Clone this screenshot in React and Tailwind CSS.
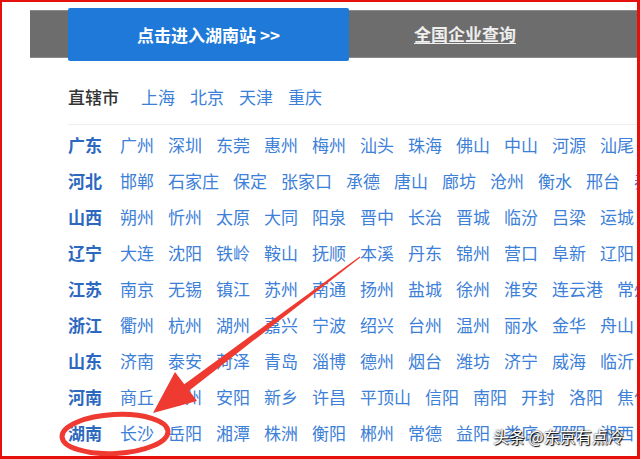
import React from 'react';

const provinces = [
  ['广东', ['广州', '深圳', '东莞', '惠州', '梅州', '汕头', '珠海', '佛山', '中山', '河源', '汕尾']],
  ['河北', ['邯郸', '石家庄', '保定', '张家口', '承德', '唐山', '廊坊', '沧州', '衡水', '邢台', '秦皇岛']],
  ['山西', ['朔州', '忻州', '太原', '大同', '阳泉', '晋中', '长治', '晋城', '临汾', '吕梁', '运城']],
  ['辽宁', ['大连', '沈阳', '铁岭', '鞍山', '抚顺', '本溪', '丹东', '锦州', '营口', '阜新', '辽阳']],
  ['江苏', ['南京', '无锡', '镇江', '苏州', '南通', '扬州', '盐城', '徐州', '淮安', '连云港', '常州']],
  ['浙江', ['衢州', '杭州', '湖州', '嘉兴', '宁波', '绍兴', '台州', '温州', '丽水', '金华', '舟山']],
  ['山东', ['济南', '泰安', '菏泽', '青岛', '淄博', '德州', '烟台', '潍坊', '济宁', '威海', '临沂']],
  ['河南', ['商丘', '郑州', '安阳', '新乡', '许昌', '平顶山', '信阳', '南阳', '开封', '洛阳', '焦作']],
  ['湖南', ['长沙', '岳阳', '湘潭', '株洲', '衡阳', '郴州', '常德', '益阳', '娄底', '邵阳', '湘西']],
];

const direct = ['上海', '北京', '天津', '重庆'];

function Annotation() {
  // hand-drawn red arrow and circle over the list
  return (
    <svg className="absolute left-0 top-0 pointer-events-none" width="640" height="459">
      <polygon
        points="358.3,255.4 357.7,254.6 181.6,382.8 186.4,389.2"
        fill="#ee3a30"
      />
      <polygon points="151,411 195,399 173,370" fill="#ee3a30" />
      <ellipse
        cx="113"
        cy="432"
        rx="53"
        ry="19.5"
        fill="none"
        stroke="#ee3a30"
        strokeWidth="5"
        transform="rotate(-3 113 432)"
      />
    </svg>
  );
}

export default function App() {
  return (
    <div className="relative w-[640px] h-[459px] overflow-hidden bg-white border-t-2 border-l-2 border-r-[3px] border-b-[3px] border-[#e5100c] font-['Noto_Sans_CJK_SC','Noto_Sans',sans-serif]">
      <div className="mt-[8px] ml-[28px] h-[48px] flex items-start bg-[#6d6d6d] border-t border-b border-[#8a8a8a]">
        <div className="ml-[38px] -mt-[3px] w-[281px] h-[53px] shrink-0 flex items-center justify-center bg-[#1f79d8] rounded-[2px] text-white text-[17px] font-bold">
          点击进入湖南站 &gt;&gt;
        </div>
        <div className="w-[232px] h-full shrink-0 flex items-center justify-center">
          <span className="text-[#eeeeee] text-[17px] font-bold underline underline-offset-2">全国企业查询</span>
        </div>
      </div>

      <div className="pl-[66px]">
        <div className="mt-[21px] h-[36px] flex items-center whitespace-nowrap text-[17px] leading-[36px]">
          <span className="w-[73px] shrink-0 font-medium text-[#333333]">直辖市</span>
          {direct.map((c) => (
            <span key={c} className="mr-[15px] shrink-0 text-[#3b7fd9]">{c}</span>
          ))}
        </div>

        <div className="mt-[9px] h-px bg-[#eeeeee]" />

        <div className="mt-[2px]">
          {provinces.map(([p, cities]) => (
            <div key={p} className="h-[36px] flex items-center whitespace-nowrap text-[17px] leading-[36px]">
              <span className="w-[52px] shrink-0 font-bold text-[#2c68bf]">{p}</span>
              {cities.map((c) => (
                <span key={c} className="mr-[14px] shrink-0 text-[#3d80d8]">{c}</span>
              ))}
            </div>
          ))}
        </div>
      </div>

      <Annotation />

      <div className="absolute left-[491px] top-[424px] text-white text-[16px] leading-[20px] whitespace-nowrap [text-shadow:0_0_2px_#000,1px_1px_1px_#000]">
        头条 @东京有点冷
      </div>
    </div>
  );
}
